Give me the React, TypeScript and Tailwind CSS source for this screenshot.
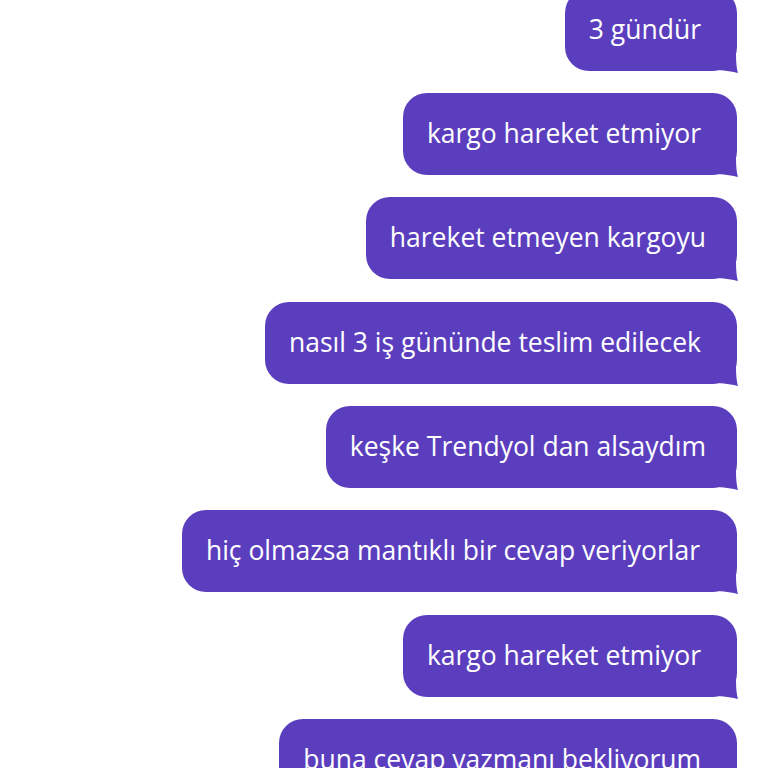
const messages = [
  { text: "3 gündür", pr: 36 },
  { text: "kargo hareket etmiyor", pr: 36 },
  { text: "hareket etmeyen kargoyu", pr: 31 },
  { text: "nasıl 3 iş gününde teslim edilecek", pr: 36 },
  { text: "keşke Trendyol dan alsaydım", pr: 31 },
  { text: "hiç olmazsa mantıklı bir cevap veriyorlar", pr: 37 },
  { text: "kargo hareket etmiyor", pr: 36 },
  { text: "buna cevap yazmanı bekliyorum", pr: 36 },
];

function Bubble({ text, pr }: { text: string; pr: number }) {
  return (
    <div className="relative">
      <div
        className="relative z-10 h-[82px] flex items-center rounded-[24px] bg-[#5b3ebe] pl-[24px] text-[26.5px] text-white whitespace-nowrap"
        style={{ paddingRight: pr }}
      >
        {text}
      </div>
      <svg
        className="absolute right-[-1px] bottom-[-3px] z-0"
        width="20"
        height="20"
        viewBox="0 0 20 20"
      >
        <path d="M0 0 H18 Q18 13 20 19 Q12 17 0 16 Z" fill="#5b3ebe" />
      </svg>
    </div>
  );
}

export default function App() {
  return (
    <div
      className="w-[768px] h-[768px] overflow-hidden bg-white"
      style={{ fontFamily: '"Open Sans", sans-serif' }}
    >
      <div className="flex flex-col items-end gap-[22.33px] pr-[31px] mt-[-11.33px]">
        {messages.map((m, i) => (
          <Bubble key={i} text={m.text} pr={m.pr} />
        ))}
      </div>
    </div>
  );
}
